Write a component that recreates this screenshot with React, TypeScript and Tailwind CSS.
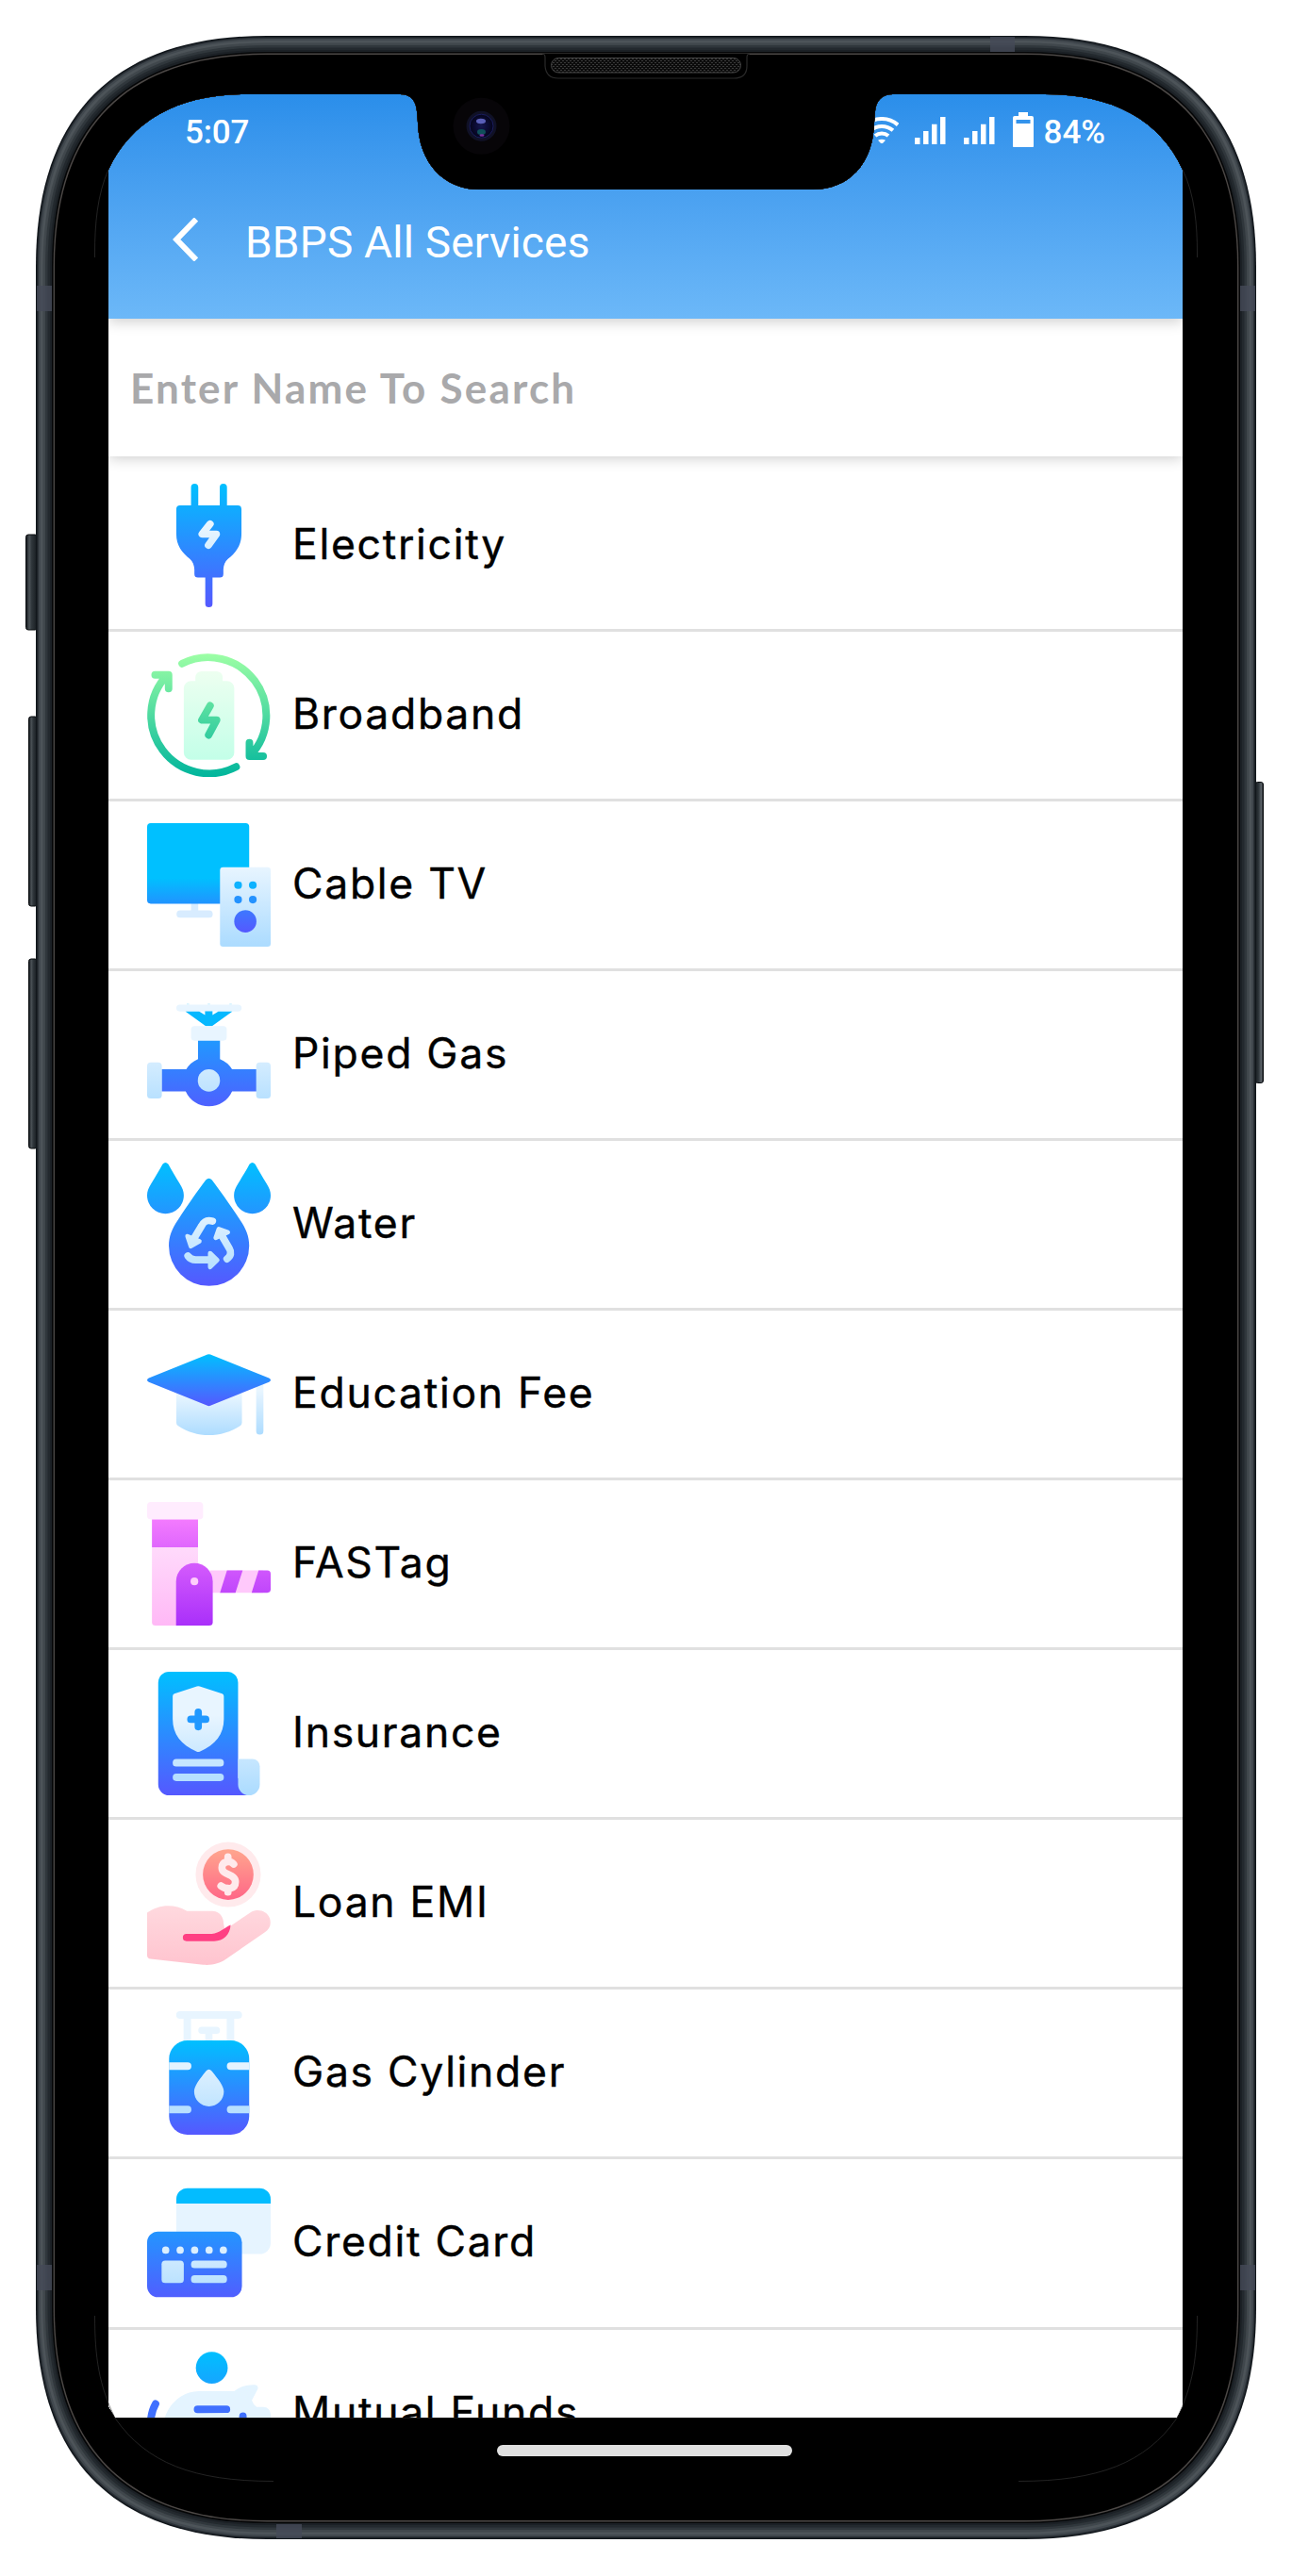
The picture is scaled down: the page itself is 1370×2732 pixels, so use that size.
import type { ReactNode } from "react";

const BLUE = "url(#blue)";
const PALE = "url(#pale)";

/** Rounded rectangle with smooth, continuous corners. */
function squircle(l: number, t: number, r: number, b: number, e: number, k = 0.66) {
  const c = e * (1 - k);
  return [
    `M${l + e} ${t}H${r - e}`,
    `C${r - c} ${t} ${r} ${t + c} ${r} ${t + e}V${b - e}`,
    `C${r} ${b - c} ${r - c} ${b} ${r - e} ${b}H${l + e}`,
    `C${l + c} ${b} ${l} ${b - c} ${l} ${b - e}V${t + e}`,
    `C${l} ${t + c} ${l + c} ${t} ${l + e} ${t}Z`,
  ].join("");
}

const rim = (inset: number) => squircle(38 + inset, 38 + inset, 1332 - inset, 2693 - inset, 245 - inset);

const SCREEN_WINDOW =
  "M115 2553V180C140 127 190 100 262 100H424C436 100 441 107 442 118L443 130C444 172 470 201 508 201H862C900 201 926 174 927 130L928 118C929 107 935 100 947 100H1108C1180 100 1230 127 1254 180V2553L1248 2564.5H122Z";

const RIM_LAYERS: [number, string][] = [
  [0, "#11161b"],
  [1.5, "#2a3036"],
  [3, "#41484e"],
  [5, "#4d5459"],
  [7.5, "#40474c"],
  [10, "#30373c"],
  [12.5, "#23292e"],
  [15, "#1b2025"],
  [17, "#050607"],
  [18.6, "#4c4846"],
  [20, "#000000"],
];

function Gradient({ id, from, to }: { id: string; from: string; to: string }) {
  return (
    <linearGradient id={id} gradientUnits="userSpaceOnUse" x1="0" y1="0" x2="0" y2="512">
      <stop stopColor={from} />
      <stop offset="1" stopColor={to} />
    </linearGradient>
  );
}

function Gradients() {
  return (
    <svg className="absolute h-0 w-0" aria-hidden="true">
      <defs>
        <Gradient id="blue" from="#00c0ff" to="#5558ff" />
        <linearGradient id="pale" gradientUnits="userSpaceOnUse" x1="0" y1="180" x2="0" y2="500">
          <stop stopColor="#e8f5ff" />
          <stop offset="1" stopColor="#addcff" />
        </linearGradient>
        <Gradient id="green" from="#9dffa5" to="#00b59c" />
        <linearGradient id="mint" gradientUnits="userSpaceOnUse" x1="0" y1="74" x2="0" y2="441">
          <stop stopColor="#edfff0" />
          <stop offset="1" stopColor="#c3ffe8" />
        </linearGradient>
        <linearGradient id="tv" gradientUnits="userSpaceOnUse" x1="0" y1="0" x2="0" y2="335">
          <stop offset="0.68" stopColor="#00c0ff" />
          <stop offset="1" stopColor="#2193ff" />
        </linearGradient>
        <linearGradient id="cap" x1="0" y1="0" x2="0" y2="1">
          <stop stopColor="#00c0ff" />
          <stop offset="1" stopColor="#5558ff" />
        </linearGradient>
        <linearGradient id="dial" x1="0" y1="0" x2="0" y2="1">
          <stop stopColor="#3d78ff" />
          <stop offset="1" stopColor="#5558ff" />
        </linearGradient>
        <linearGradient id="capPale" x1="0" y1="0" x2="0" y2="1">
          <stop offset="0.2" stopColor="#e8f5ff" />
          <stop offset="1" stopColor="#addcff" />
        </linearGradient>
        <Gradient id="violet" from="#ff87ff" to="#a92ffa" />
        <Gradient id="rose" from="#ffeefe" to="#ffb8f6" />
        <linearGradient id="coin" gradientUnits="userSpaceOnUse" x1="0" y1="32" x2="0" y2="243">
          <stop stopColor="#ffa68e" />
          <stop offset="1" stopColor="#ff6687" />
        </linearGradient>
        <Gradient id="skin" from="#fff0f0" to="#ffc4cf" />
      </defs>
    </svg>
  );
}

function Icon({ children }: { children: ReactNode }) {
  return (
    <svg viewBox="0 0 512 512" className="h-[131px] w-[131px] shrink-0" fill="none">
      {children}
    </svg>
  );
}

const round = { strokeLinecap: "round", strokeLinejoin: "round" } as const;

const SERVICES: { name: string; icon: ReactNode }[] = [
  {
    name: "Electricity",
    icon: (
      <>
        <path
          fill={BLUE}
          d="M182 90V15a15 15 0 0 1 30 0v75h89V15a15 15 0 0 1 30 0v75h45a15 15 0 0 1 15 15v103c0 48-24 78-56 104-12 10-19 27-19 45v17a15 15 0 0 1-15 15h-30v108a15 15 0 0 1-30 0V389h-30a15 15 0 0 1-15-15v-17c0-18-7-35-19-45-32-26-56-56-56-104V105a15 15 0 0 1 15-15z"
        />
        <path stroke={PALE} strokeWidth="30" {...round} d="M261 167L228 209H287L254 255" />
      </>
    ),
  },
  {
    name: "Broadband",
    icon: (
      <>
        <path
          fill="url(#mint)"
          d="M200 114V99a25 25 0 0 1 25-25h63a25 25 0 0 1 25 25v15h18a30 30 0 0 1 30 30v267a30 30 0 0 1-30 30H182a30 30 0 0 1-30-30V144a30 30 0 0 1 30-30z"
        />
        <g stroke="url(#green)" strokeWidth="31" {...round}>
          <path d="M145 42A241 241 0 0 1 429 422M424 370v56h57" />
          <path d="M369 470A241 241 0 0 1 83 90M89 146V89H33" />
          <path d="M261 217L227 276H288L255 338" />
        </g>
      </>
    ),
  },
  {
    name: "Cable TV",
    icon: (
      <>
        <path fill="#d8ecff" d="M182 330h30v32h45a15 15 0 0 1 0 30H137a15 15 0 0 1 0-30h45z" />
        <rect fill="url(#tv)" width="423" height="334" rx="15" />
        <rect fill={PALE} x="302" y="183" width="210" height="329" rx="13" />
        <g fill="#0db2ff">
          <circle cx="377" cy="257" r="16" />
          <circle cx="438" cy="257" r="16" />
        </g>
        <g fill="#2492ff">
          <circle cx="377" cy="317" r="16" />
          <circle cx="438" cy="317" r="16" />
        </g>
        <circle cx="407" cy="407" r="46" fill="url(#dial)" />
      </>
    ),
  },
  {
    name: "Piped Gas",
    icon: (
      <>
        <rect fill="#e8f5ff" x="121" y="49" width="271" height="28" rx="14" />
        <path fill="#05b8ff" d="M159 77h57l24 15V76h31v16l24-15h58l-84 61h-26z" />
        <path fill="#d0f1ff" d="M164 44h10v5h-10zM251 44h10v5h-10zM341 44h10v5h-10z" />
        <path fill={BLUE} d="M211 195h91v80a105 105 0 0 1 50 42h102v91H352a105 105 0 0 1-192 0H60v-91h102a105 105 0 0 1 49-42z" />
        <rect fill="#e8f5ff" x="182" y="138" width="148" height="60" rx="14" />
        <rect fill={PALE} y="288" width="61" height="150" rx="15" />
        <rect fill={PALE} x="452" y="288" width="60" height="150" rx="15" />
        <circle fill={PALE} cx="256" cy="363" r="46" />
      </>
    ),
  },
  {
    name: "Water",
    icon: (
      <>
        <g fill={BLUE}>
          <path d="M64 7Q76-7 88 7C100 30 120 62 135 87C147 106 152 120 152 136A76 76 0 0 1 0 136C0 120 5 106 17 87C32 62 52 30 64 7Z" />
          <path d="M424 7Q436-7 448 7C460 30 480 62 495 87C507 106 512 120 512 136A76 76 0 0 1 360 136C360 120 365 106 377 87C392 62 412 30 424 7Z" />
          <path d="M243 72Q256 58 269 72C300 113 343 174 385 237C411 275 423 306 423 345A166.500 166.500 0 0 1 90 345C90 306 102 275 128 237C169 174 212 113 243 72Z" />
        </g>
        <g stroke={PALE} strokeWidth="30" {...round}>
          <path d="M271 243C249 236 236 243 226 262L196 312" />
          <path d="M331 399C348 387 350 372 341 357L312 307" />
          <path d="M169 387C178 400 187 403 201 403H258" />
        </g>
        <g fill={PALE} stroke={PALE} strokeWidth="18" strokeLinejoin="round">
          <path d="M167 305L217 326L181 347Z" />
          <path d="M297 275L335 289L284 312Z" />
          <path d="M261 375L291 404L261 433Z" />
        </g>
      </>
    ),
  },
  {
    name: "Education Fee",
    icon: (
      <>
        <path fill="url(#capPale)" d="M121 220H393V374Q393 383 385 388C310 439 202 439 129 388Q121 383 121 374Z" />
        <rect fill="url(#capPale)" x="452" y="195" width="30" height="229" rx="15" />
        <path fill="url(#cap)" d="M250 92Q256 89 262 92L505 190Q519 198 505 206L262 304Q256 307 250 304L7 206Q-7 198 7 190Z" />
      </>
    ),
  },
  {
    name: "FASTag",
    icon: (
      <>
        <path fill="url(#rose)" d="M20 188H211V512H35a15 15 0 0 1-15-15z" />
        <rect fill="#ffecfe" width="232" height="72" rx="15" />
        <path fill="url(#violet)" d="M20 72H211V188H20z" />
        <path fill="#ffc9fb" d="M260 283H480V376H260z" />
        <path fill="url(#violet)" d="M331 283H396L366 376H302zM462 283H498a14 14 0 0 1 14 14V362a14 14 0 0 1-14 14H433z" />
        <path fill="url(#violet)" d="M120 512V329a76 76 0 0 1 152 0V497a15 15 0 0 1-15 15z" />
        <circle fill="#ffcdfb" cx="196" cy="329" r="16" />
      </>
    ),
  },
  {
    name: "Insurance",
    icon: (
      <>
        <path fill={BLUE} d="M91 0H332a45 45 0 0 1 45 45V440L420 512H91a45 45 0 0 1-45-45V45A45 45 0 0 1 91 0z" />
        <path fill={PALE} d="M377 362H437a30 30 0 0 1 30 30V467a45 45 0 0 1-90 0z" />
        <path fill={PALE} d="M206 61Q212 58 218 61L311 91Q318 94 318 102V196C318 258 284 302 218 331Q212 333 206 331C140 302 106 258 106 196V102Q106 94 113 91Z" />
        <path fill="#2098ff" d="M197 182V167a15 15 0 0 1 30 0V182H243a15 15 0 0 1 0 30H227V228a15 15 0 0 1-30 0V212H181a15 15 0 0 1 0-30z" />
        <rect fill="#c6e6ff" x="106" y="362" width="212" height="31" rx="15" />
        <rect fill="#b6dfff" x="106" y="422" width="212" height="31" rx="15" />
      </>
    ),
  },
  {
    name: "Loan EMI",
    icon: (
      <>
        <circle cx="336" cy="137" r="135" fill="#ffeaec" />
        <circle cx="336" cy="137" r="105" fill="url(#coin)" />
        <path
          stroke="#ffeaec"
          strokeWidth="30"
          {...round}
          d="M335 64V80M335 194V210M359 94C342 76 310 84 310 108C310 142 366 132 366 168C366 198 330 202 306 184"
        />
        <path
          fill="url(#skin)"
          d="M0 295C45 262 110 255 165 288H270C298 288 316 310 317 340L322 366L430 293C462 276 498 290 508 318C516 344 508 362 488 376L324 490C302 506 268 514 232 511L14 487Q0 485 0 472Z"
        />
        <path fill="#ff3f83" d="M163 383H268C302 380 318 358 346 346C344 386 316 413 278 413H163a15 15 0 0 1 0-30z" />
      </>
    ),
  },
  {
    name: "Gas Cylinder",
    icon: (
      <>
        <path fill="#e8f5ff" d="M136 0H378a15 15 0 0 1 0 31H361V130H330V31H182V130H151V31H136a15 15 0 0 1 0-31z" />
        <path fill="#e8f5ff" d="M227 64H287a15 15 0 0 1 0 30H271V130H241V94H227a15 15 0 0 1 0-30z" />
        <rect fill="url(#cap)" x="91" y="121" width="332" height="391" rx="76" />
        <path fill="#e4f3ff" d="M91 212H168a15 15 0 0 1 0 31H91zM423 212H346a15 15 0 0 0 0 31H423z" />
        <path fill="#b9e0ff" d="M91 392H168a15 15 0 0 1 0 31H91zM423 392H346a15 15 0 0 0 0 31H423z" />
        <path fill={PALE} d="M244 248Q256 234 268 248C296 283 318 311 318 333A61.500 61.500 0 0 1 195 333C195 311 216 283 244 248Z" />
      </>
    ),
  },
  {
    name: "Credit Card",
    icon: (
      <>
        <path fill="#e6f4ff" d="M121 90H512V258a45 45 0 0 1-45 45H121z" />
        <path fill="#03bcff" d="M121 94V76a46 46 0 0 1 46-46H466a46 46 0 0 1 46 46V94z" />
        <rect fill={BLUE} y="210" width="393" height="272" rx="45" />
        <g fill="#dbefff">
          <circle cx="77" cy="287" r="15" />
          <circle cx="137" cy="287" r="15" />
          <circle cx="197" cy="287" r="15" />
          <circle cx="257" cy="287" r="15" />
          <circle cx="316" cy="287" r="15" />
        </g>
        <g fill={PALE}>
          <rect x="60" y="330" width="92" height="93" rx="15" />
          <rect x="182" y="330" width="149" height="32" rx="15" />
          <rect x="182" y="391" width="149" height="32" rx="15" />
        </g>
      </>
    ),
  },
  {
    name: "Mutual Funds",
    icon: (
      <>
        <circle fill={BLUE} cx="268" cy="67" r="66" />
        <path
          fill="#e4f4ff"
          d="M62 400V330C66 240 130 164 215 164H361C385 143 420 136 448 138Q464 142 458 156L434 202Q440 220 454 230H482a30 30 0 0 1 30 30V400z"
        />
        <path stroke="#4070ff" strokeWidth="31" strokeLinecap="round" d="M209 239.500L329 239M397 268V276M35 217C24 236 18 252 15 285" />
      </>
    ),
  },
];

function Signal({ className }: { className: string }) {
  return (
    <svg viewBox="0 0 33 29" className={className} fill="currentColor">
      <path d="M0 22h5.500v7H0zM9 15h5.500v14H9zM18 7.700h5.500V29H18zM27 0h5.500v29H27z" />
    </svg>
  );
}

function StatusBar() {
  return (
    <div className="flex h-[86px] items-start pl-[81px] font-['Roboto'] text-[35px] leading-[41px] font-medium text-white">
      <span className="mt-5 w-[69px] tracking-[-0.2px]">5:07</span>
      <svg viewBox="0 0 36 28" className="mt-[24px] ml-[652px] h-7 w-9" fill="none" stroke="currentColor" strokeWidth="4">
        <path d="M.9 8.400A26 26 0 0 1 35.100 8.400M6.100 14.300A18.300 18.300 0 0 1 29.900 14.300M11 20A10.700 10.700 0 0 1 25 20" />
        <path fill="currentColor" stroke="none" d="M14 24.800Q18 22.500 22 24.800L18 29Z" />
      </svg>
      <Signal className="mt-[24px] ml-[17px] h-[29px] w-[33px]" />
      <Signal className="mt-[24px] ml-[18.500px] h-[29px] w-[33px]" />
      <svg viewBox="0 0 22 37" className="mt-[19px] ml-[19px] h-[37px] w-[22px]">
        <path
          fill="currentColor"
          fillRule="evenodd"
          d="M6 4V0h10v4h4a2 2 0 0 1 2 2v29.500a2 2 0 0 1-2 2H2a2 2 0 0 1-2-2V6a2 2 0 0 1 2-2zM3.500 8v4h15V8z"
        />
      </svg>
      <span className="mt-5 ml-[11px]">84%</span>
    </div>
  );
}

function Header() {
  return (
    <header className="relative z-10 h-[238px] shrink-0 bg-linear-to-b from-[#2a8eea] to-[#6cb8f8] shadow-[0_3px_14px_rgba(0,0,0,0.2)]">
      <StatusBar />
      <div className="flex h-[136px] items-center pl-[68px] text-white">
        <svg viewBox="0 0 27 46" className="h-[46px] w-[27px]" fill="none" stroke="currentColor" strokeWidth="6">
          <path d="M25 1.500L4.200 23L25 44.500" />
        </svg>
        <h1 className="mt-[6px] ml-[50px] font-['Roboto'] text-[46px] leading-none font-normal tracking-[0.2px]">BBPS All Services</h1>
      </div>
    </header>
  );
}

function PhoneBody() {
  return (
    <svg viewBox="0 0 1370 2732" className="pointer-events-none absolute inset-0 z-20 h-full w-full" fill="none">
      <defs>
        <clipPath id="window" clipPathUnits="userSpaceOnUse">
          <path clipRule="evenodd" d={`M0 0H1370V2732H0Z${SCREEN_WINDOW}`} />
        </clipPath>
        <linearGradient id="keyLeft">
          <stop stopColor="#0d1115" />
          <stop offset="0.3" stopColor="#4c5358" />
          <stop offset="0.5" stopColor="#30373c" />
          <stop offset="1" stopColor="#161b1f" />
        </linearGradient>
        <linearGradient id="keyRight">
          <stop stopColor="#161b1f" />
          <stop offset="0.45" stopColor="#30373c" />
          <stop offset="0.75" stopColor="#5d646a" />
          <stop offset="1" stopColor="#0d1115" />
        </linearGradient>
        <pattern id="mesh" width="4" height="4" patternUnits="userSpaceOnUse">
          <path fill="#0c0c0c" d="M0 0h4v4H0z" />
          <path fill="#3a3a3a" d="M0 0h2v1H0zM2 2h2v1H2z" />
        </pattern>
        <radialGradient id="lens">
          <stop stopColor="#15174e" />
          <stop offset="0.55" stopColor="#0b0b34" />
          <stop offset="1" stopColor="#05051a" />
        </radialGradient>
      </defs>

      <g stroke="#090c0f" strokeWidth="1">
        <rect x="27.500" y="567" width="12" height="101" rx="2.500" fill="url(#keyLeft)" />
        <rect x="30.500" y="760" width="9" height="201" rx="2.500" fill="url(#keyLeft)" />
        <rect x="30.500" y="1017" width="9" height="201" rx="2.500" fill="url(#keyLeft)" />
        <rect x="1331" y="829.500" width="8.500" height="319" rx="2.500" fill="url(#keyRight)" />
      </g>

      <g clipPath="url(#window)">
        {RIM_LAYERS.map(([inset, fill]) => (
          <path key={inset} d={rim(inset)} fill={fill} />
        ))}
        <g fill="#454a58" opacity="0.8">
          <path d="M39 303H55V330H39zM39 2402H55V2429H39zM1315 303H1331V330H1315zM1315 2402H1331V2429H1315z" />
          <path d="M1050 39H1076V55H1050zM293 2677H320V2692H293z" />
        </g>
      </g>

      <g stroke="#3a3a3a" strokeWidth="0.600">
        <path d="M100.500 273V268C100.500 240 103 206 115 180M1269.500 273V268C1269.500 240 1267 206 1254 180" />
        <path d="M100.500 2456C100.500 2500 105 2530 122 2564.500C155 2612 205 2631.500 290 2631.500M1269.500 2456C1269.500 2500 1265 2530 1248 2564.500C1215 2612 1165 2631.500 1080 2631.500" />
      </g>

      <path fill="#000" stroke="#2a2a2a" strokeWidth="1.200" d="M575 57Q578 57 578 61V70Q579 83 592 83H778Q792 83 792 70V61Q792 57 795 57" />
      <rect x="584.500" y="61.500" width="201" height="15.500" rx="7.700" fill="url(#mesh)" stroke="#444" />

      <circle cx="510.500" cy="133.700" r="30" fill="#070508" />
      <circle cx="510.500" cy="133.700" r="16" fill="#101126" />
      <circle cx="510.500" cy="133.700" r="12.500" fill="url(#lens)" stroke="#1a1d5e" />
      <ellipse cx="510" cy="128.500" rx="5" ry="2.800" fill="#5a5fb8" />
      <ellipse cx="510.500" cy="140" rx="4.500" ry="3" fill="#0f4f5a" />
      <ellipse cx="511" cy="143.500" rx="2.500" ry="1.200" fill="#7a2fa0" />
    </svg>
  );
}

export default function App() {
  return (
    <div className="relative h-[2732px] w-[1370px] overflow-hidden bg-white pt-[100px]">
      <Gradients />
      <main className="ml-[115px] flex h-[2464px] w-[1139px] flex-col overflow-hidden bg-white">
        <Header />
        <div className="relative z-[5] flex h-[146px] shrink-0 items-center bg-white px-[23px] shadow-[0_2px_14px_rgba(0,0,0,0.2)]">
          <input
            type="text"
            placeholder="Enter Name To Search"
            className="w-full bg-transparent font-['Lato'] text-[44px] font-bold tracking-[2.2px] outline-none placeholder:text-[#a9a9ab] placeholder:opacity-100"
          />
        </div>
        <ul className="mt-[6px]">
          {SERVICES.map(({ name, icon }) => (
            <li key={name} className="flex h-[180.060px] items-center gap-[23px] border-b-[3px] border-[#e0e0e0] pl-[41px]">
              <Icon>{icon}</Icon>
              <span className="mb-[3px] font-['Inter'] text-[44.500px] leading-[54px] font-normal tracking-[1.700px] whitespace-nowrap text-black [-webkit-text-stroke:0.400px_black]">
                {name}
              </span>
            </li>
          ))}
        </ul>
      </main>
      <div className="relative z-30 mt-[29px] ml-[527px] h-3 w-[313px] rounded-full bg-[#e0e0e0]" />
      <PhoneBody />
    </div>
  );
}
